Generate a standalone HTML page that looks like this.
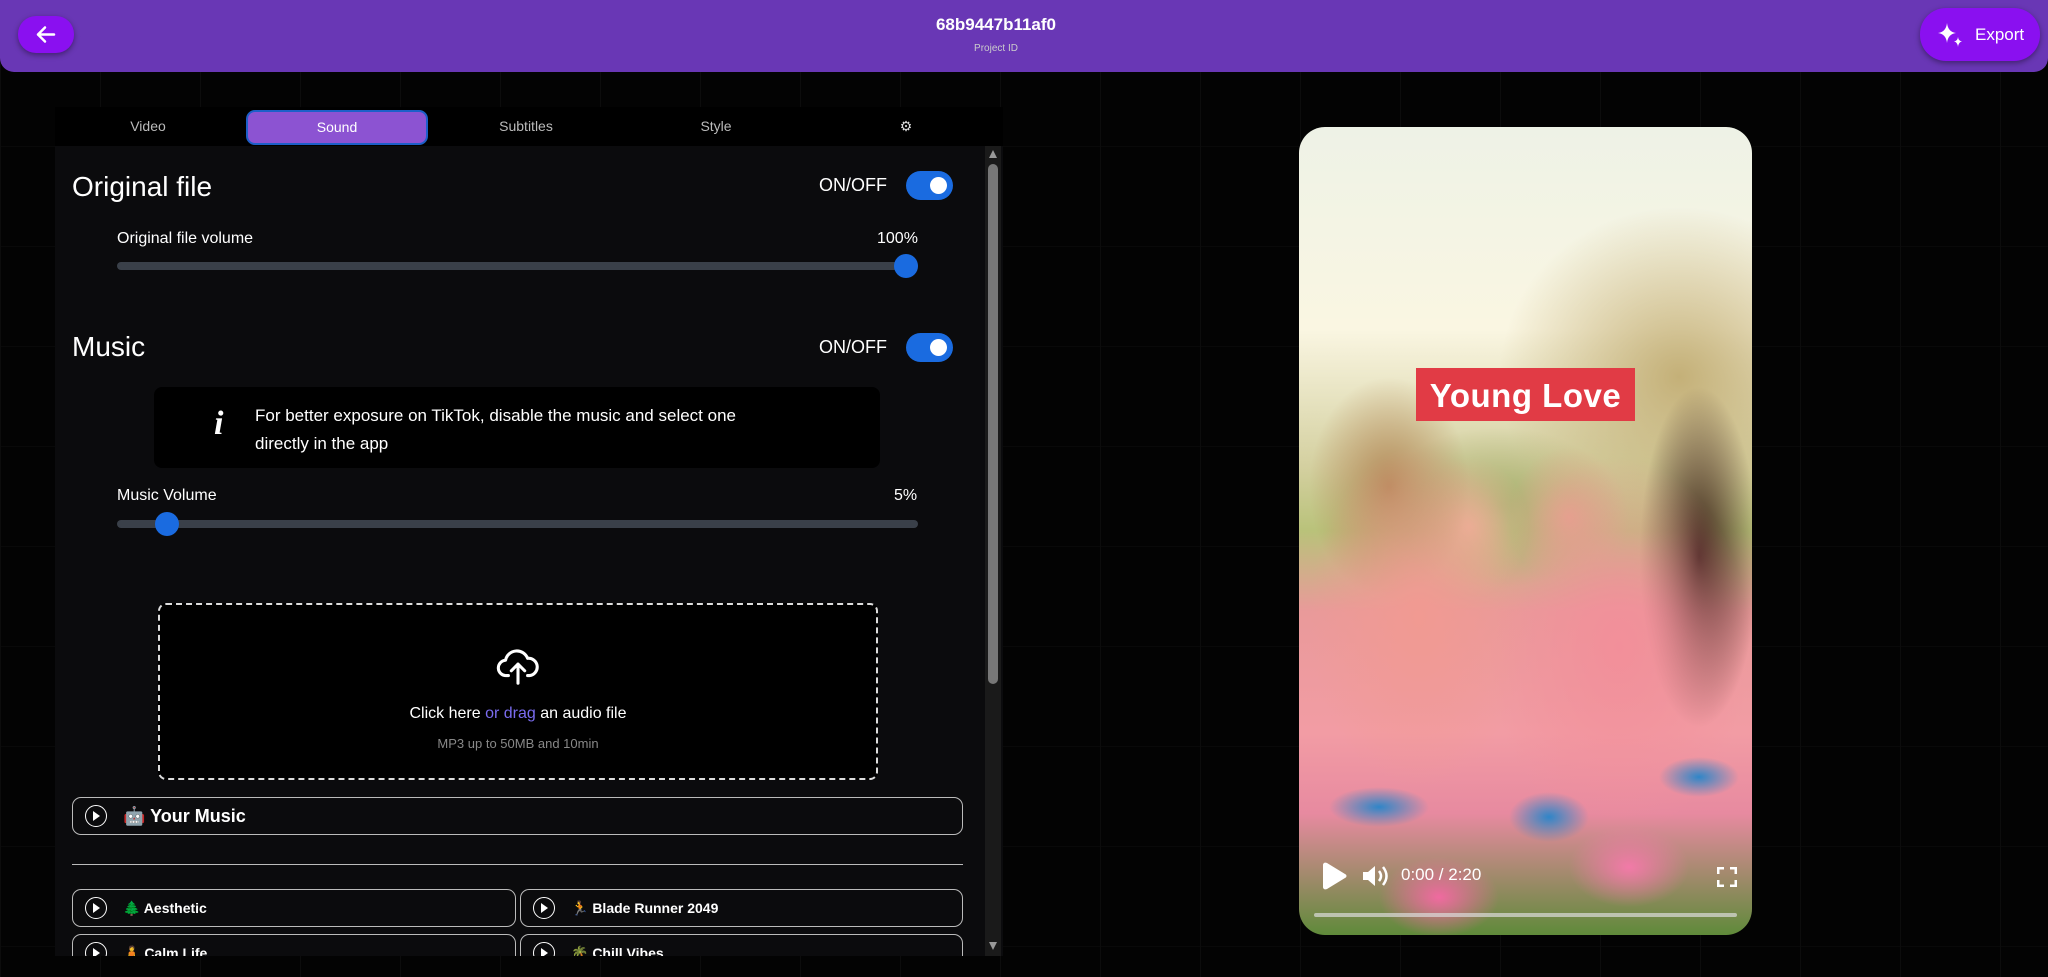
<!DOCTYPE html>
<html><head><meta charset="utf-8"><style>
*{box-sizing:border-box;margin:0;padding:0}
body{width:2048px;height:977px;overflow:hidden;background:#030303;font-family:"Liberation Sans",sans-serif;color:#fff;position:relative;
background-image:linear-gradient(90deg,#0c0c0c 1px,transparent 1px),linear-gradient(#090909 1px,transparent 1px);background-size:100px 100px;background-position:0 0,0 46px}
.hdr{position:absolute;left:0;top:0;width:2048px;height:72px;background:#6937b5;border-radius:0 0 14px 14px}
.back{position:absolute;left:18px;top:16px;width:56px;height:37px;border-radius:18px;background:#8a10f0;box-shadow:0 2px 6px rgba(0,0,0,.4)}
.ttl{position:absolute;left:0;width:2048px;text-align:center;top:15px;font-weight:bold;font-size:17px;padding-right:56px}
.sub{position:absolute;left:0;width:2048px;text-align:center;top:43px;font-size:10px;color:#ccc;padding-right:56px}
.exp{position:absolute;left:1920px;top:8px;width:120px;height:53px;border-radius:26px;background:#8a10f0;box-shadow:0 2px 6px rgba(0,0,0,.4);font-size:17px}
.panel{position:absolute;left:55px;top:107px;width:948px;height:849px;background:#0b0b0d;overflow:hidden}
.tabs{position:absolute;left:0;top:0;width:948px;height:39px;background:#000}
.tab{position:absolute;top:11px;font-size:14px;color:#bbb;transform:translateX(-50%)}
.stab{position:absolute;left:191px;top:3px;width:182px;height:35px;border:2px solid #1d5fc8;border-radius:9px;background:#8c53d2;text-align:center;line-height:30px;font-size:14px}
.t{position:absolute;white-space:nowrap}
.tog{position:absolute;width:47px;height:29px;border-radius:15px;background:#1a6be0}
.tog:after{content:"";position:absolute;right:6px;top:6px;width:17px;height:17px;border-radius:50%;background:#fff}
.trk{position:absolute;left:62px;width:801px;height:8px;border-radius:4px;background:#3a4049}
.th{position:absolute;width:24px;height:24px;border-radius:50%;background:#1a6be0;top:-8px}
.row{position:absolute;border:1px solid #bbb;border-radius:9px;font-weight:bold}
.play{position:absolute;left:12px;width:22px;height:22px;border:1.5px solid #fff;border-radius:50%}
.play:after{content:"";position:absolute;left:7px;top:5px;border-left:7px solid #fff;border-top:5px solid transparent;border-bottom:5px solid transparent}
.play i{position:absolute;left:8.5px;top:7px;border-left:4px solid #000;border-top:3px solid transparent;border-bottom:3px solid transparent}
.vid{position:absolute;left:1299px;top:127px;width:453px;height:808px;border-radius:26px;overflow:hidden;
background:
radial-gradient(ellipse 60px 40px at 140px 770px,#f06aa0,transparent),
radial-gradient(ellipse 60px 40px at 330px 740px,#f27aa8,transparent),
radial-gradient(ellipse 50px 20px at 80px 680px,#2f86c8,transparent),
radial-gradient(ellipse 40px 25px at 250px 690px,#2f86c8,transparent),
radial-gradient(ellipse 40px 20px at 400px 650px,#2f86c8,transparent),
radial-gradient(ellipse 110px 170px at 120px 490px,#f19a92,transparent),
radial-gradient(ellipse 130px 190px at 320px 520px,#f28f9a,transparent),
radial-gradient(ellipse 70px 200px at 400px 430px,#3a1f18,transparent 85%),
radial-gradient(ellipse 80px 110px at 90px 360px,#b58a5a,transparent),
radial-gradient(ellipse 60px 70px at 170px 400px,#e9b496,transparent),
radial-gradient(ellipse 60px 70px at 270px 390px,#e2a48c,transparent),
radial-gradient(ellipse 180px 170px at 380px 250px,#c4b078,transparent),
radial-gradient(ellipse 120px 80px at 200px 380px,#a8b070,transparent),
linear-gradient(180deg,#eef2e6 0%,#faf6e2 25%,#d4d0a0 42%,#b9c27a 50%,#e99a9a 60%,#f29ca4 75%,#e78aa0 85%,#5f8a3a 100%)}
</style></head><body>
<div class="hdr">
<div class="back"><svg width="56" height="37" viewBox="0 0 56 37"><path d="M36 18.5H20M27 11.5l-7 7 7 7" stroke="#fff" stroke-width="2.5" fill="none" stroke-linecap="round" stroke-linejoin="round"/></svg></div>
<div class="ttl">68b9447b11af0</div><div class="sub">Project ID</div>
<div class="exp"><svg style="position:absolute;left:16px;top:13px" width="30" height="30" viewBox="0 0 30 30"><path d="M11 2Q12 11 20 12Q12 13 11 22Q10 13 2 12Q10 11 11 2Z" fill="#fff"/><path d="M22 16Q22.5 20 26 20.5Q22.5 21 22 26Q21.5 21 18 20.5Q21.5 20 22 16Z" fill="#fff"/></svg><span style="position:absolute;left:55px;top:17px">Export</span></div>
</div>
<div class="panel">
<div class="tabs">
<div class="tab" style="left:93px">Video</div>
<div class="stab">Sound</div>
<div class="tab" style="left:471px">Subtitles</div>
<div class="tab" style="left:661px">Style</div>
<div class="tab" style="left:851px;color:#ddd">⚙</div>
</div>
<div style="position:absolute;left:930px;top:39px;width:16px;height:810px;background:#1a1a1a"><div style="position:absolute;left:3px;top:18px;width:10px;height:520px;background:#777;border-radius:5px"></div><div style="position:absolute;left:4px;top:4px;border-bottom:8px solid #999;border-left:4px solid transparent;border-right:4px solid transparent"></div><div style="position:absolute;left:4px;bottom:6px;border-top:8px solid #999;border-left:4px solid transparent;border-right:4px solid transparent"></div></div>
<div class="t" style="left:17px;top:64px;font-size:28px">Original file</div>
<div class="t" style="left:764px;top:68px;font-size:18px">ON/OFF</div>
<div class="tog" style="left:851px;top:64px"></div>
<div class="t" style="left:62px;top:123px;font-size:16px">Original file volume</div>
<div class="t" style="left:822px;top:123px;font-size:16px">100%</div>
<div class="trk" style="top:155px"><div class="th" style="left:777px"></div></div>
<div class="t" style="left:17px;top:224px;font-size:28px">Music</div>
<div class="t" style="left:764px;top:230px;font-size:18px">ON/OFF</div>
<div class="tog" style="left:851px;top:226px"></div>
<div style="position:absolute;left:99px;top:280px;width:726px;height:81px;background:#000;border-radius:8px">
<div class="t" style="left:60px;top:18px;font-size:34px;font-style:italic;font-weight:bold;font-family:'Liberation Serif',serif">i</div>
<div class="t" style="left:101px;top:15px;font-size:17px;line-height:28px">For better exposure on TikTok, disable the music and select one<br>directly in the app</div></div>
<div class="t" style="left:62px;top:380px;font-size:16px">Music Volume</div>
<div class="t" style="left:839px;top:380px;font-size:16px">5%</div>
<div class="trk" style="top:413px"><div class="th" style="left:38px"></div></div>
<div style="position:absolute;left:103px;top:496px;width:720px;height:177px;border:2px dashed #ddd;border-radius:8px;background:#000">
<svg style="position:absolute;left:335px;top:38px" width="46" height="46" viewBox="0 0 24 24" fill="none" stroke="#fff" stroke-width="1.6" stroke-linecap="round" stroke-linejoin="round"><path d="M7 17H6a4 4 0 0 1-.5-8A6 6 0 0 1 17 8a4.5 4.5 0 0 1 1 9h-1"/><path d="M12 21V11M8.5 14.5L12 11l3.5 3.5"/></svg>
<div style="position:absolute;left:0;width:716px;top:100px;text-align:center;font-size:16px">Click here <span style="color:#7a6cf0">or drag</span> an audio file</div>
<div style="position:absolute;left:0;width:716px;top:131px;text-align:center;font-size:13px;color:#888">MP3 up to 50MB and 10min</div></div>
<div class="row" style="left:17px;top:690px;width:891px;height:38px"><div class="play" style="top:7px"><i></i></div><span class="t" style="left:50px;top:8px;font-size:18px">🤖 Your Music</span></div>
<div style="position:absolute;left:17px;top:757px;width:891px;height:1px;background:#bbb"></div>
<div class="row" style="left:17px;top:782px;width:444px;height:38px"><div class="play" style="top:7px"><i></i></div><span class="t" style="left:50px;top:10px;font-size:14px">🌲 Aesthetic</span></div>
<div class="row" style="left:465px;top:782px;width:443px;height:38px"><div class="play" style="top:7px"><i></i></div><span class="t" style="left:50px;top:10px;font-size:14px">🏃 Blade Runner 2049</span></div>
<div class="row" style="left:17px;top:827px;width:444px;height:38px"><div class="play" style="top:7px"><i></i></div><span class="t" style="left:50px;top:10px;font-size:14px">🧘 Calm Life</span></div>
<div class="row" style="left:465px;top:827px;width:443px;height:38px"><div class="play" style="top:7px"><i></i></div><span class="t" style="left:50px;top:10px;font-size:14px">🌴 Chill Vibes</span></div>
</div>
<div class="vid">
<div style="position:absolute;left:117px;top:241px;width:219px;height:53px;background:#e13b45"></div>
<div class="t" style="left:117px;top:250px;width:219px;text-align:center;font-size:33px;font-weight:bold;font-family:'Liberation Sans',sans-serif;letter-spacing:0.5px">Young Love</div>
<svg style="position:absolute;left:20px;top:735px" width="30" height="28" viewBox="0 0 30 28"><path d="M4 3C4 1 6 0 8 1L26 12c2 1 2 3 0 4L8 27c-2 1-4 0-4-2Z" fill="#fff"/></svg>
<svg style="position:absolute;left:62px;top:736px" width="30" height="26" viewBox="0 0 30 26"><path d="M2 9h5l7-6v20l-7-6H2Z" fill="#fff"/><path d="M18 8q4 5 0 10M22 4q7 9 0 18" stroke="#fff" stroke-width="2.5" fill="none"/></svg>
<div class="t" style="left:102px;top:738px;font-size:17px">0:00 / 2:20</div>
<svg style="position:absolute;left:418px;top:740px" width="20" height="20" viewBox="0 0 20 20" stroke="#fff" stroke-width="3" fill="none"><path d="M1 7V1h6M13 1h6v6M19 13v6h-6M7 19H1v-6"/></svg>
<div style="position:absolute;left:15px;top:786px;width:423px;height:4px;border-radius:2px;background:rgba(220,220,220,.7)"></div>
</div>
</body></html>
